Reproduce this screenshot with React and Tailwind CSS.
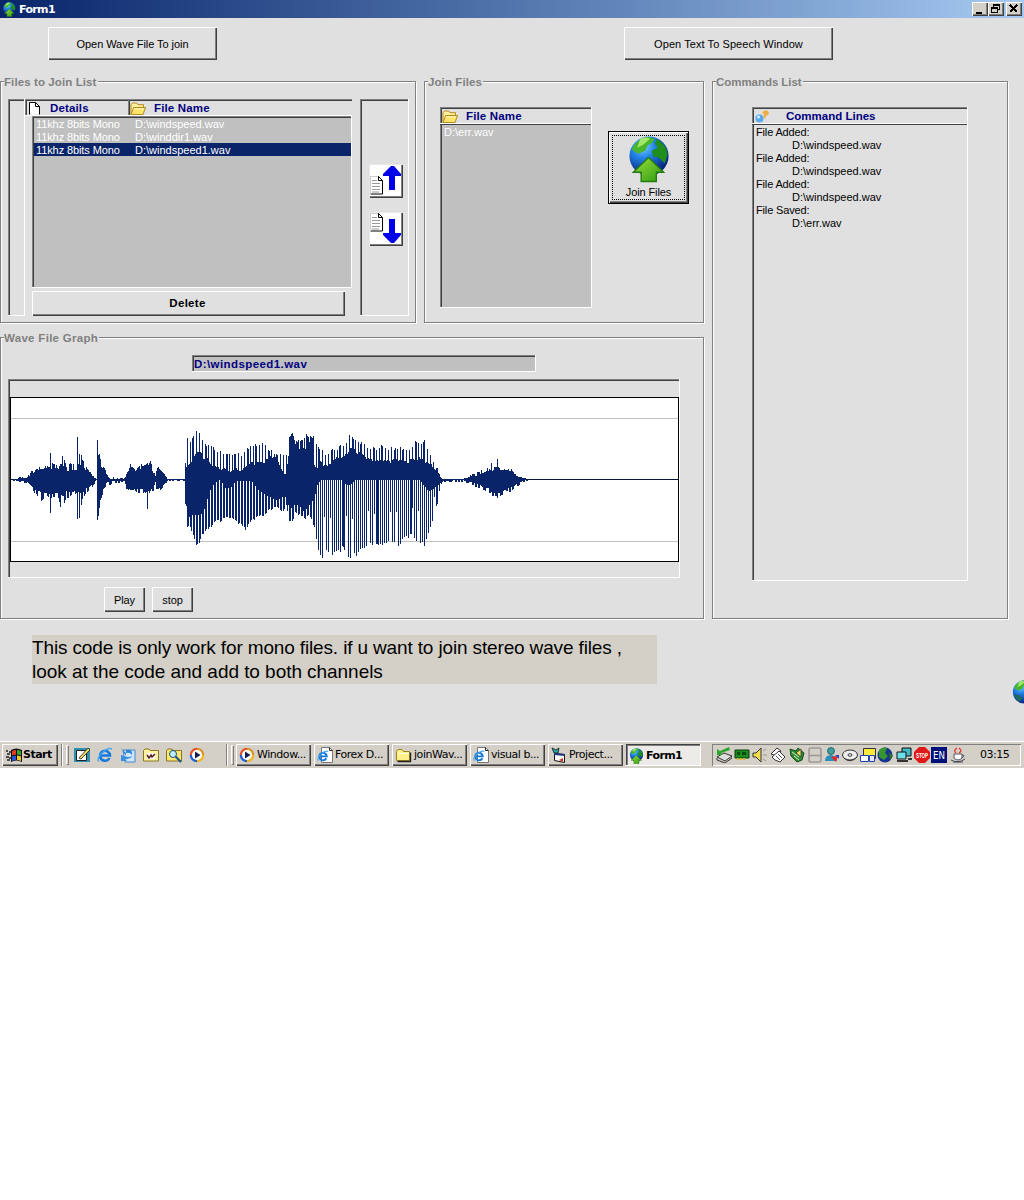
import React from "react";

const RAISED =
  "bg-[#e0e0e0] shadow-[inset_1px_1px_0_#fff,inset_-1px_-1px_0_#404040,inset_-2px_-2px_0_#808080]";
const SUNKEN =
  "shadow-[inset_-1px_-1px_0_#fff,inset_1px_1px_0_#808080,inset_2px_2px_0_#404040]";
const TASK =
  "bg-[#d4d0c8] shadow-[inset_1px_1px_0_#fff,inset_-1px_-1px_0_#404040,inset_-2px_-2px_0_#808080]";

function Group({ label, className, children }) {
  return (
    <section className={"relative shrink-0 border border-[#808080] shadow-[1px_1px_0_#fff,inset_1px_1px_0_#fff] " + className}>
      <h2 className="absolute left-[3px] top-[-6px] h-3 bg-[#e0e0e0] pr-px text-[11.5px] font-bold leading-[13px] tracking-[0.1px] text-[#808080]">
        {label}
      </h2>
      {children}
    </section>
  );
}

function Folder({ className }) {
  return (
    <svg viewBox="0 0 16 14" className={className}>
      <path d="M1 12V2.500L2.500 1h4L8 2.700h5.500V6" fill="#fff0a0" stroke="#b58a1c" />
      <path d="M1 12.500L3.500 5.500H15.500L13 12.500Z" fill="#ffe36a" stroke="#b58a1c" />
      <path d="M4.500 7h9" stroke="#fffbd0" />
    </svg>
  );
}

function ClosedFolder() {
  return (
    <svg viewBox="0 0 17 15" className="h-[15px] w-[17px] shrink-0">
      <path d="M1.500 12.500v-9l1.500-2h4l1.500 2h6v9z" fill="#fff08a" stroke="#9b8420" />
      <path d="M2.500 13.500h13v-9" fill="none" stroke="#222" strokeWidth="1.400" />
      <path d="M3 5.500h11" stroke="#fffde0" />
    </svg>
  );
}

function Globe({ className, arrow = true, id }) {
  return (
    <svg viewBox="0 0 42 48" className={className}>
      <defs>
        <radialGradient id={id} cx="35%" cy="25%" r="75%">
          <stop offset="0" stopColor="#7fd0ff" />
          <stop offset=".4" stopColor="#2183e6" />
          <stop offset="1" stopColor="#08227c" />
        </radialGradient>
        <linearGradient id={id + "a"} x1="0" x2="1" y2="1">
          <stop offset="0" stopColor="#9be03c" />
          <stop offset="1" stopColor="#2d9a12" />
        </linearGradient>
      </defs>
      <circle cx="21" cy="20.500" r="20" fill={`url(#${id})`} />
      <path d="M6 9Q12 1 21 1L27 3Q24 8 20 9L17 15L10 18L5 15Q2 14 6 9Z" fill="#48b52a" />
      <path d="M29 3Q39 9 40 19L37 28L31 22L25 21L24 15L30 12L27 8Z" fill="#1f8e1d" />
      <path d="M12 3Q17 0 22 3L15 9L9 12Z" fill="#a4e86b" />
      {!arrow && <path d="M4 25L13 26L17 32L12 37Q5 33 4 25Z" fill="#1d6a5e" />}
      {arrow && (
        <path d="M20.500 22L36 37H28.500V46.500H13V37H5Z" fill={`url(#${id}a)`} stroke="#237b10" strokeWidth="1.4" />
      )}
    </svg>
  );
}

/* x, outer top, inner top, inner bottom, outer bottom (distance from the axis) */
const ENVELOPE = [
  [10, 0, 0, 0, 0], [15, 1, 0, 0, 1], [20, 3, 1, 1, 2], [27, 4, 2, 2, 3], [31, 9, 5, 5, 6],
  [34, 10, 8, 10, 13], [41, 15, 10, 12, 21], [46, 15, 11, 13, 17], [49, 14, 11, 14, 18],
  [50, 27, 27, 33, 33], [51, 18, 11, 14, 18], [58, 15, 10, 13, 18], [60, 25, 15, 15, 27],
  [63, 26, 12, 16, 27], [66, 14, 8, 11, 18], [70, 18, 9, 12, 17], [76, 15, 9, 11, 13],
  [77, 42, 42, 39, 39], [78, 18, 14, 12, 20], [79, 28, 25, 38, 41], [80, 15, 13, 13, 18],
  [81, 27, 26, 16, 26], [82, 22, 16, 13, 20],
  [85, 15, 10, 9, 14], [90, 8, 6, 6, 10], [94, 3, 2, 2, 4], [96, 1, 0, 0, 1], [97, 38, 38, 40, 40],
  [98, 27, 20, 36, 38], [99, 28, 24, 25, 30], [101, 16, 13, 14, 18], [104, 13, 8, 6, 9],
  [107, 5, 3, 2, 4], [110, 7, 1, 1, 5], [114, 1, 0, 1, 3], [124, 2, 0, 1, 2], [126, 8, 5, 6, 9],
  [130, 17, 12, 10, 11], [135, 10, 9, 9, 11], [140, 16, 10, 9, 15], [144, 19, 14, 9, 12],
  [146, 18, 14, 12, 15], [147, 18, 14, 29, 29], [148, 17, 13, 11, 15], [150, 20, 12, 10, 12], [153, 11, 7, 8, 11], [155, 4, 1, 1, 2],
  [157, 14, 11, 9, 17], [160, 12, 9, 8, 10], [164, 6, 5, 4, 7], [167, 1, 1, 0, 1],
  [183, 1, 0, 0, 1], [184, 1, 1, 1, 1], [185, 18, 14, 14, 25], [187, 42, 12, 38, 47],
  [190, 41, 14, 36, 50], [193, 46, 22, 35, 57], [196, 49, 26, 35, 65], [198, 51, 25, 35, 68],
  [200, 46, 25, 35, 62], [203, 40, 21, 33, 54], [206, 37, 20, 22, 52], [210, 35, 14, 10, 48],
  [215, 31, 12, 2, 43], [220, 29, 9, 0, 42], [225, 28, 10, 8, 39], [230, 26, 7, 8, 38],
  [236, 29, 10, 1, 43], [240, 25, 7, 1, 45], [245, 30, 12, 1, 50], [251, 36, 15, 1, 42],
  [258, 36, 15, 10, 37], [264, 38, 16, 14, 36], [270, 30, 22, 17, 30], [276, 27, 20, 20, 28],
  [283, 26, 6, 17, 32], [286, 27, 4, 17, 26], [288, 38, 24, 25, 38], [290, 47, 40, 28, 43],
  [292, 51, 46, 28, 43], [295, 38, 34, 24, 33], [300, 41, 27, 27, 36], [304, 45, 30, 32, 40],
  [309, 47, 35, 25, 36], [314, 43, 14, 18, 48], [317, 36, 10, 5, 68], [320, 32, 16, 0, 80],
  [326, 26, 12, 0, 74], [330, 30, 15, 0, 76], [336, 32, 20, 0, 75], [342, 36, 20, 0, 70],
  [346, 39, 24, 5, 75], [350, 47, 30, 5, 81], [355, 42, 27, 0, 77], [361, 39, 24, 0, 72],
  [367, 34, 20, 0, 65], [374, 32, 16, 0, 68], [382, 35, 18, 0, 66], [390, 32, 17, 0, 64],
  [397, 33, 19, 0, 67], [405, 32, 16, 0, 59], [411, 32, 18, 0, 57], [415, 39, 18, 0, 61],
  [419, 39, 20, 0, 64], [424, 40, 17, 6, 66], [428, 31, 14, 11, 56], [431, 24, 14, 10, 46],
  [435, 13, 9, 7, 29], [437, 12, 8, 6, 25], [440, 3, 2, 3, 5], [442, 1, 1, 1, 2],
  [462, 1, 0, 0, 2], [470, 5, 3, 2, 4], [478, 8, 4, 4, 8], [484, 12, 7, 8, 10], [488, 12, 8, 8, 14],
  [490, 11, 8, 10, 14], [491, 18, 16, 12, 16], [492, 12, 9, 13, 16], [496, 14, 11, 13, 17], [497, 20, 19, 18, 19], [498, 14, 12, 13, 16],
  [500, 13, 9, 12, 16], [506, 11, 9, 9, 12],
  [511, 11, 8, 7, 12], [515, 6, 4, 5, 8], [520, 3, 2, 2, 4], [526, 1, 0, 0, 1], [528, 0, 0, 0, 0],
];

function wavePath() {
  let d = "";
  let k = 0;
  for (let x = 10; x < 528; x++) {
    while (k < ENVELOPE.length - 2 && ENVELOPE[k + 1][0] <= x) k++;
    const a = ENVELOPE[k];
    const b = ENVELOPE[k + 1];
    const f = (x - a[0]) / (b[0] - a[0]);
    const v = (i) => a[i] + (b[i] - a[i]) * f;
    const r = ((x * 7919 + x * x * 31) % 17) / 17;
    const loud = x > 184 && x < 440;
    const comb = x > 314 && x < 436;
    const outerTop = loud ? x % 3 === 1 || x % 7 === 3 || (x > 288 && x < 314 && x % 2 === 0) : r > 0.6;
    const outerBottom = comb ? x % 2 === 0 || x % 17 === 3 : loud ? x % 3 !== 0 : r < 0.3 || r > 0.85;
    const top = outerTop ? v(1) - r * v(1) * 0.1 : v(2) + r * Math.min(3, v(2) * 0.2);
    const short = comb && (x * 31) % 11 < 2 ? 0.5 : 1;
    const bottom = outerBottom ? (v(4) - r * v(4) * 0.06) * short : v(3);
    d += `M${x - 10 + 0.5} ${Math.round(82.6 - top)}V${Math.round(83 + bottom)}`;
  }
  return d;
}
const WAVE = wavePath();

function Sheet({ y }) {
  return (
    <g>
      <path d={`M1.500 ${y + 0.5}h8l4 4V${y + 18}H1.500`} fill="#fff" stroke="#000" strokeWidth="1" />
      <path d={`M1.500 ${y}V${y + 18}M1 ${y + 0.5}h8`} stroke="#ccc" />
      <path d={`M9.500 ${y + 0.5}v4h4`} fill="none" stroke="#000" />
      <path d={`M3 ${y + 4.5}h5M3 ${y + 7.5}h8M3 ${y + 10.5}h8M3 ${y + 13.5}h8M3 ${y + 16}h7`} stroke="#999" />
    </g>
  );
}

function MoveButton({ down }) {
  return (
    <button className="block h-[34px] w-[34px] bg-white shadow-[inset_1px_1px_0_#e8e8e8,inset_-1px_-1px_0_#404040,inset_-2px_-2px_0_#808080]">
      <svg viewBox="0 0 34 34" className="size-[34px]">
        <Sheet y={down ? 1 : 12} />
        {down ? (
          <path d="M20 7h6v14h6v2l-7 8h-3l-8-8v-2h6z" fill="#0000e8" />
        ) : (
          <path d="M20 26h6V12h6v-2L25 2h-3l-8 8v2h6z" fill="#0000e8" />
        )}
      </svg>
    </button>
  );
}

function HeaderCell({ icon, children, className, gap }) {
  return (
    <div className={"flex h-[17px] items-center bg-[#e0e0e0] shadow-[inset_0_-1px_0_#fff,inset_1px_1px_0_#808080,inset_2px_2px_0_#404040] " + className}>
      {icon}
      <span className={"pt-px text-[11.5px] font-bold leading-[15px] tracking-[0.15px] text-[#000080] " + gap}>{children}</span>
    </div>
  );
}

const FILES = [
  ["11khz 8bits Mono", "D:\\windspeed.wav"],
  ["11khz 8bits Mono", "D:\\winddir1.wav"],
  ["11khz 8bits Mono", "D:\\windspeed1.wav"],
];
const COMMANDS = [
  ["File Added:", "D:\\windspeed.wav"],
  ["File Added:", "D:\\windspeed.wav"],
  ["File Added:", "D:\\windspeed.wav"],
  ["File Saved:", "D:\\err.wav"],
];

function FilesGroup() {
  return (
    <Group label="Files to Join List" className="flex h-[242px] w-[416px] pl-[7px] pt-[17px]">
      <div className={"h-[217px] w-[17px] " + SUNKEN} />
      <div className="w-[327px]">
        <div className="flex">
          <HeaderCell className="w-[103px] pl-[3px]" gap="ml-[9px]" icon={
            <svg viewBox="0 0 13 14" className="h-[14px] w-[13px]">
              <path d="M1.500 13.500V1.500h6l4 4v8" fill="#fff" stroke="#000" />
              <path d="M7.500 1.500v4h4" fill="none" stroke="#000" />
            </svg>
          }>Details</HeaderCell>
          <HeaderCell className="w-[224px] pl-[2px]" gap="ml-2" icon={<Folder className="mt-[2px] h-[14px] w-4" />}>File Name</HeaderCell>
        </div>
        <div className={"ml-[7px] h-[172px] bg-[#c0c0c0] pl-[2px] pr-px pt-px text-white " + SUNKEN}>
          {FILES.map(([d, f], i) => (
            <div key={i} className={"flex h-[13px] pl-[2px] leading-[14px] " + (i === 2 ? "bg-[#0a246a]" : "")}>
              <span className="w-[99px] tracking-[-0.1px]">{d}</span>
              <span>{f}</span>
            </div>
          ))}
        </div>
        <button className={"ml-[7px] mt-[3px] block h-[25px] w-[313px] pr-[2px] pt-px text-[11.5px] font-bold tracking-[0.3px] " + RAISED}>Delete</button>
      </div>
      <div className={"ml-2 flex h-[217px] w-[49px] flex-col gap-[14px] pl-[9px] pt-[65px] " + SUNKEN}>
        <MoveButton />
        <MoveButton down />
      </div>
    </Group>
  );
}

function JoinGroup() {
  return (
    <Group label="Join Files" className="flex h-[242px] w-[280px] pl-[15px] pt-[25px]">
      <div className={"h-[201px] w-[152px] bg-[#c0c0c0] " + SUNKEN}>
        <HeaderCell className="mr-px pl-[2px]" gap="ml-2" icon={<Folder className="mt-[2px] h-[14px] w-4" />}>File Name</HeaderCell>
        <div className="mr-px h-px bg-[#404040]" />
        <p className="pl-1 leading-[14px] text-white">D:\err.wav</p>
      </div>
      <button className="ml-4 mt-6 flex h-[73px] w-[81px] flex-col items-center border border-black bg-[#e0e0e0] p-[3px] shadow-[inset_1px_1px_0_#fff,inset_-1px_-1px_0_#404040,inset_-2px_-2px_0_#808080]">
        <span className="flex h-[65px] w-[73px] flex-col items-center border border-dotted border-black">
          <Globe id="gj" className="h-[48px] w-[42px]" />
          <span className="mt-[3px] leading-[13px] tracking-[-0.1px]">Join Files</span>
        </span>
      </button>
    </Group>
  );
}

function GraphGroup() {
  return (
    <Group label={<span className="tracking-[0.3px]">Wave File Graph</span>} className="h-[282px] w-[704px] pl-[7px] pt-[17px]">
      <div className={"ml-[184px] h-[17px] w-[344px] bg-[#c0c0c0] pl-[2px] text-[11.5px] font-bold leading-[18px] tracking-[0.42px] text-[#000080] " + SUNKEN}>
        D:\windspeed1.wav
      </div>
      <div className={"mt-[7px] h-[199px] w-[672px] pl-[2px] pt-[18px] " + SUNKEN}>
        <div className="h-[165px] w-[669px] border border-black bg-white">
          <svg viewBox="1 1 667 163" className="block h-[163px] w-[667px]" shapeRendering="crispEdges">
            <path d="M1 21.500H668M1 144.500H668" stroke="#c0c0c0" />
            <path d="M1 82.500H668" stroke="#0a1438" />
            <path d={WAVE} stroke="#0a246a" strokeWidth="1" />
          </svg>
        </div>
      </div>
      <div className="ml-24 mt-[9px] flex gap-[7px]">
        <button className={"h-[25px] w-[41px] pt-px tracking-[-0.1px] " + RAISED}>Play</button>
        <button className={"h-[25px] w-[41px] pt-px tracking-[-0.1px] " + RAISED}>stop</button>
      </div>
    </Group>
  );
}

function CommandsGroup() {
  return (
    <Group label={<span className="tracking-[-0.05px]">Commands List</span>} className="h-[538px] w-[296px] pl-[39px] pt-[25px]">
      <div className={"h-[474px] w-[216px] " + SUNKEN}>
        <HeaderCell className="mr-px pl-[3px]" gap="ml-[17px]" icon={
          <svg viewBox="0 0 14 14" className="h-[14px] w-[14px]">
            <circle cx="4.500" cy="9.500" r="4" fill="#5aaaf0" />
            <circle cx="3.500" cy="8" r="1.500" fill="#d5efff" />
            <path d="M7 3L11 1l3 2-1 3-2 1-1 3-2-2 1-2z" fill="#eeb045" />
          </svg>
        }><span className="tracking-[0px]">Command Lines</span></HeaderCell>
        <div className="mr-px h-px bg-[#404040]" />
        <div className="pt-px">
          {COMMANDS.map(([a, b], i) => (
            <div key={i} className="pl-1 leading-[13px]">
              <p className="tracking-[-0.15px]">{a}</p>
              <p className="pl-9">{b}</p>
            </div>
          ))}
        </div>
      </div>
    </Group>
  );
}

function WindowButton({ children, className = "" }) {
  return (
    <button className={"h-[14px] w-4 bg-[#d4d0c8] shadow-[inset_1px_1px_0_#fff,inset_-1px_-1px_0_#404040,inset_-2px_-2px_0_#808080] " + className}>
      <svg viewBox="0 0 16 14" className="h-[14px] w-4" shapeRendering="crispEdges">{children}</svg>
    </button>
  );
}

function TitleBar() {
  return (
    <header className="flex h-[18px] items-center bg-linear-to-r from-[#0a246a] to-[#a6caf0] pl-[3px] pr-[2px]">
      <Globe id="gt" className="h-[15px] w-[13px]" />
      <h1 className="ml-[3px] mt-px font-['DejaVu_Sans'] text-[11px] font-bold leading-4 tracking-[-0.65px] text-white">Form1</h1>
      <div className="ml-auto flex">
        <WindowButton><path d="M4 10h6v2H4z" /></WindowButton>
        <WindowButton><path d="M5 2h7v6h-2V7h1V4H6v1H5zM3 5h7v6H3zM4 7v3h5V7z" fillRule="evenodd" /></WindowButton>
        <WindowButton className="ml-[2px]"><path d="M4 3l7 7M11 3L4 10" stroke="#000" strokeWidth="1.600" /></WindowButton>
      </div>
    </header>
  );
}

function MediaIcon() {
  return (
    <svg viewBox="0 0 16 16" className="size-4 shrink-0">
      <path d="M8 2A6 6 0 0 0 2 8" fill="none" stroke="#e5532d" strokeWidth="2.600" />
      <path d="M2 8A6 6 0 0 0 8 14" fill="none" stroke="#2361d5" strokeWidth="2.600" />
      <path d="M8 14A6 6 0 0 0 14 8" fill="none" stroke="#f2b51a" strokeWidth="2.600" />
      <path d="M14 8A6 6 0 0 0 8 2" fill="none" stroke="#d9942a" strokeWidth="2.600" />
      <circle cx="8" cy="8" r="5" fill="#fff" />
      <path d="M6 4.500L11.500 8 6 11.500z" fill="#111c50" />
    </svg>
  );
}

function IeGlyph() {
  return (
    <g fill="none">
      <path d="M12.500 11A5 5 0 1 1 13 8.500H4" stroke="#1479dd" strokeWidth="2.6" />
      <path d="M2 14.500Q-1 12 5 6T15 2" stroke="#48a8f0" strokeWidth="1.4" />
    </g>
  );
}

function PageIcon() {
  return (
    <svg viewBox="0 0 16 16" className="size-4 shrink-0">
      <path d="M4.500.5h8l3 3v12h-11z" fill="#fff" stroke="#777" />
      <path d="M12.500.5v3h3" fill="none" stroke="#222" />
      <g transform="translate(0 3) scale(.75)"><IeGlyph /></g>
    </svg>
  );
}

function TaskButton({ icon, children, active }) {
  return (
    <button
      className={
        "mr-[3px] flex h-[22px] w-[75px] shrink-0 items-center overflow-hidden whitespace-nowrap pl-[3px] font-['DejaVu_Sans'] text-[11px] " +
        (active
          ? "gap-[2px] bg-[#ecebe7] pt-[2px] font-bold tracking-[-0.6px] shadow-[inset_-1px_-1px_0_#fff,inset_1px_1px_0_#404040,inset_2px_2px_0_#808080]"
          : "gap-[2px] tracking-[-0.45px] " + TASK)
      }
    >
      {icon}
      <span>{children}</span>
    </button>
  );
}

function Handle() {
  return (
    <div className="flex h-[22px] gap-[3px]">
      <i className="w-[2px] border-l border-r border-l-[#808080] border-r-white" />
      <i className="my-px w-[3px] border border-b-[#808080] border-l-white border-r-[#808080] border-t-white" />
    </div>
  );
}

const QUICK = [
  <g key="q">
    <path d="M0 1h16v14H0z" fill="#2e8fae" />
    <path d="M2.500 3.500h10v10h-10z" fill="#fff" stroke="#222" />
    <path d="M5 11L14 1l2 2-9 9z" fill="#f3d35a" stroke="#222" strokeWidth=".8" />
  </g>,
  <IeGlyph key="q" />,
  <g key="q">
    <path d="M3 3h12v12H5z" fill="#cfe6fc" stroke="#4488cc" />
    <path d="M1 1l5 5V3q7-1 6 5-2-3-6-2v3z" fill="#2f83db" />
    <path d="M1 8v6h6l-2-2q4 1 8-3-5 2-9 0z" fill="#3b8fe3" />
  </g>,
  <g key="q">
    <path d="M.5 14V3.500L2 2h4l1 1.500h8.500V14z" fill="#fff3a0" stroke="#8b7420" />
    <path d="M4 6h8v6H4z" fill="#fff" />
    <path d="M4 8l2 3 2-3 1 2 3-3" fill="none" stroke="#5b1a1a" strokeWidth="1.500" />
  </g>,
  <g key="q">
    <path d="M.5 14V3.500L2 2h4l1 1.500h8.500V14z" fill="#ffe66d" stroke="#8b7420" />
    <circle cx="7" cy="7" r="3.500" fill="#bff0ff" stroke="#1c4d7c" />
    <path d="M9.500 9.500L15 15" stroke="#14508a" strokeWidth="2" />
  </g>,
];

const TRAY = [
  <g key="t">
    <path d="M1 10l7-4 8 3-7 5z" fill="#ddd" stroke="#333" />
    <path d="M1 11v2l8 3 7-5V9" fill="none" stroke="#333" />
    <path d="M1 2v6h6L5 6l9-3-1-3-9 4z" fill="#2aa52f" />
  </g>,
  <g key="t">
    <path d="M1 3h14v8H1z" fill="#1e8b22" stroke="#063f09" />
    <path d="M3 5h3v3H3zM8 5h4v3H8z" fill="#0c4d12" />
    <path d="M3 12h2M6 12h2M9 12h2" stroke="#d5b42b" strokeWidth="2" />
  </g>,
  <g key="t">
    <path d="M1 6h3l5-5v14l-5-5H1z" fill="#f0df4f" stroke="#333" />
    <path d="M11 4l3-2M11 8h4M11 12l3 2" stroke="#999" />
  </g>,
  <g key="t">
    <path d="M1 7l6-6 4 3-4 5z" fill="#fff" stroke="#333" />
    <path d="M2 10l7-6 6 6-5 5-5-2z" fill="#fff" stroke="#333" />
    <path d="M6 9l4 4M8 7l4 4" stroke="#555" />
  </g>,
  <g key="t">
    <path d="M1 2l6 2 2-3 6 5-2 7-5 2-6-6z" fill="#2c8c36" stroke="#174a19" />
    <path d="M3 5l7 5M5 9l5 4" stroke="#dff0b0" strokeWidth="1" />
    <path d="M7 6l5-4v8z" fill="#f0e35f" stroke="#333" strokeWidth=".8" />
  </g>,
  <g key="t" fill="none" stroke="#999" strokeWidth="1.600">
    <rect x="2" y="1" width="12" height="14" rx="2" />
    <path d="M2 8.500h12" />
  </g>,
  <g key="t">
    <circle cx="7" cy="4" r="3.500" fill="#3f9d9b" stroke="#175a60" strokeWidth=".8" />
    <path d="M1 14q0-6 6-6 5 0 6 6z" fill="#2a8fba" />
    <path d="M7 10l7-1-2 6z" fill="#e52920" />
    <path d="M11 8l4 0 0 4z" fill="#2448d2" />
  </g>,
  <g key="t">
    <ellipse cx="8" cy="8" rx="7.500" ry="5" fill="#eee" stroke="#333" />
    <path d="M2 11q6 6 13-1" fill="none" stroke="#333" />
    <ellipse cx="8" cy="8" rx="2" ry="1.300" fill="#fff" stroke="#333" />
  </g>,
  <g key="t">
    <path d="M3.500 1.500h12v10h-12z" fill="#f9ea3b" stroke="#333" />
    <path d="M.5 8.500h8v6h-8z" fill="#fff" stroke="#2040b5" />
    <path d="M9.500 8.500h5v6h-5z" fill="#e8e8ff" stroke="#2040b5" />
  </g>,
  <g key="t">
    <circle cx="8" cy="8" r="7.500" fill="#17358f" />
    <path d="M2 3q5-4 8-2l-2 5 3 3-4 4-5-3z" fill="#37962f" />
    <path d="M12 5l4 4-3 4z" fill="#2a7529" />
  </g>,
  <g key="t">
    <path d="M6 1h9v8H6z" fill="#40b9c4" stroke="#111" />
    <path d="M1 5h9v7H1z" fill="#6ae0ea" stroke="#111" />
    <path d="M1 14h11M12 12h4" stroke="#333" strokeWidth="2" />
  </g>,
  <g key="t">
    <path d="M5 0h6l5 5v6l-5 5H5l-5-5V5z" fill="#e01818" />
    <text x="2" y="10.500" fontFamily="Liberation Sans" fontWeight="bold" fontSize="7" textLength="12" lengthAdjust="spacingAndGlyphs" fill="#fff">STOP</text>
  </g>,
  <g key="t">
    <path d="M0 0h16v16H0z" fill="#00107b" />
    <text x="2" y="12" fontFamily="DejaVu Sans" fontSize="10.500" textLength="12" lengthAdjust="spacingAndGlyphs" fill="#fff">EN</text>
  </g>,
  <g key="t">
    <path d="M4 7h8v4q-4 4-8 0z" fill="#fff" stroke="#556" />
    <path d="M12 8q4 0 0 3M1 13q7 4 14-1M3 15h10" fill="none" stroke="#445" />
    <path d="M6 6q-3-2 1-5M9 6q4-2 0-5" fill="none" stroke="#e03625" strokeWidth="1.300" />
  </g>,
];
const TRAY_W = [
  "w-[19px]", "w-[18px]", "w-[17px]", "w-[20px]", "w-[18px]", "w-[17px]", "w-[18px]",
  "w-[18px]", "w-[17px]", "w-[18px]", "w-[19px]", "w-[17px]", "w-[18px]", "w-[20px]",
];

function Taskbar() {
  return (
    <footer className="flex h-[27px] w-[1024px] items-start border-t border-white bg-[#d4d0c8] pl-[2px] pt-[2px]">
      <button className={"flex h-[22px] w-14 items-center pl-1 font-['DejaVu_Sans'] text-[11px] font-bold tracking-[-0.5px] " + TASK}>
        <svg viewBox="0 0 17 15" className="h-[15px] w-[17px]">
          <path d="M0 3h2M1 6h3M0 9h3M1 12h3M3 4h2M3 10h2" stroke="#222" strokeWidth="1.500" />
          <path d="M5 2q5-3 11 0v12q-6-3-11 0z" fill="#111" />
          <path d="M6 3q2-1 4-1v4.500q-2 0-4 1z" fill="#e63a22" />
          <path d="M11 2q2 0 4 1v4.500q-2-1-4-1z" fill="#35a52e" />
          <path d="M6 8.500q2-1 4-1V12q-2 0-4 1z" fill="#2854dc" />
          <path d="M11 7.500q2 0 4 1V13q-2-1-4-1z" fill="#f3c82b" />
        </svg>
        <span>Start</span>
      </button>
      <div className="ml-[3px]"><Handle /></div>
      <div className="ml-[5px] flex h-[22px] w-[152px] items-center gap-[7px]">
        {QUICK.map((g, i) => (
          <svg key={i} viewBox="0 0 16 16" className="size-4 shrink-0">{g}</svg>
        ))}
        <MediaIcon />
      </div>
      <Handle />
      <div className="ml-[2px] flex">
        <TaskButton icon={<MediaIcon />}>Window...</TaskButton>
        <TaskButton icon={<PageIcon />}>Forex D...</TaskButton>
        <TaskButton icon={<ClosedFolder />}>joinWav...</TaskButton>
        <TaskButton icon={<PageIcon />}>visual b...</TaskButton>
        <TaskButton icon={
          <svg viewBox="0 0 16 16" className="size-4 shrink-0">
            <path d="M1 1l4 2 3-2-1 5H3z" fill="#26aaa9" stroke="#111" strokeWidth=".8" />
            <path d="M3.500 6.500l10 1v8l-10-2z" fill="#fff" stroke="#111" />
            <path d="M3 6l11 1v2L3 8z" fill="#22327d" />
            <path d="M8 13l4-2v4z" fill="#d83227" />
          </svg>
        }>Project...</TaskButton>
        <TaskButton active icon={<Globe id="gb" className="h-4 w-[15px] shrink-0" />}>Form1</TaskButton>
      </div>
      <div className="ml-2 flex h-[22px] w-[309px] items-center pl-[2px] shadow-[inset_1px_1px_0_#808080,inset_-1px_-1px_0_#fff]">
        {TRAY.map((g, i) => (
          <div key={i} className={"flex shrink-0 justify-center " + TRAY_W[i]}>
            <svg viewBox="0 0 16 16" className="size-4">{g}</svg>
          </div>
        ))}
        <time className="ml-[12px] pt-px font-['DejaVu_Sans'] text-[11px] tracking-[-0.5px]">03:15</time>
      </div>
    </footer>
  );
}

export default function App() {
  return (
    <div className="min-h-[1200px] w-[1024px] overflow-hidden bg-white font-['Liberation_Sans',Arial,sans-serif] text-[11px] text-black">
      <div className="flex h-[768px] w-[1024px] flex-col bg-[#e0e0e0]">
        <TitleBar />
        <div className="flex h-[63px] shrink-0 gap-[407px] pl-12 pt-[9px]">
          <button className={"h-[33px] w-[169px] pt-px tracking-[-0.05px] " + RAISED}>Open Wave File To join</button>
          <button className={"h-[33px] w-[209px] pt-px tracking-[0.07px] " + RAISED}>Open Text To Speech Window</button>
        </div>
        <main className="flex shrink-0 gap-2">
          <div className="flex flex-col gap-[14px]">
            <div className="flex gap-2">
              <FilesGroup />
              <JoinGroup />
            </div>
            <GraphGroup />
          </div>
          <CommandsGroup />
        </main>
        <div className="flex h-[122px] shrink-0 items-start justify-between overflow-hidden pl-8 pt-4">
          <p className="h-[49px] w-[625px] whitespace-nowrap bg-[#d4d0c8] pt-px text-[19px] leading-6">
            <span className="tracking-[-0.145px]">This code is only work for mono files. if u want to join stereo wave files ,</span>
            <br />
            <span className="tracking-[-0.05px]">look at the code and add to both channels</span>
          </p>
          <div className="mt-[45px] h-[25px] w-3 overflow-hidden">
            <Globe id="gs" arrow={false} className="h-[28px] w-[25px] max-w-none" />
          </div>
        </div>
        <Taskbar />
      </div>
    </div>
  );
}
